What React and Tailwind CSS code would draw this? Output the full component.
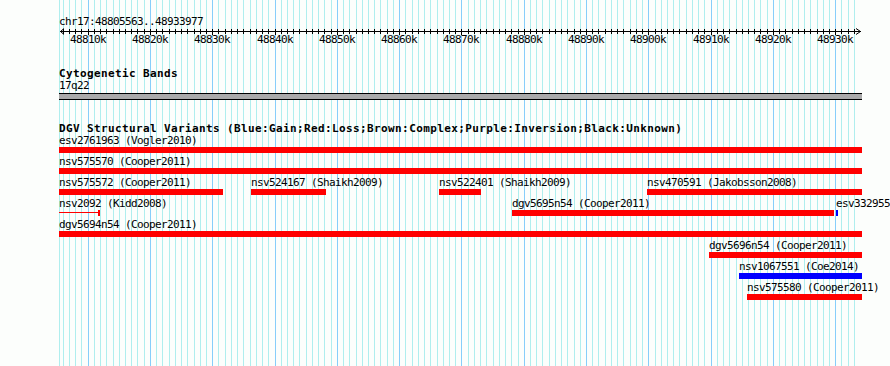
import React from "react";

const START = 48805563;
const SPAN = 128414;
const X0 = 60;
const W = 800;
const LEFT = 59;
const xOf = (bp) => Math.round(X0 + ((bp - START) / SPAN) * W);

const gridLines = [];
for (let k = 48806; k <= 48933; k++) {
  gridLines.push({ x: xOf(k * 1000), major: k % 10 === 0, k });
}
const majors = gridLines.filter((g) => g.major);

const RED = "#ff0000";
const BLUE = "#0000ff";

const rows = [
  [{ label: "esv2761963 (Vogler2010)", x1: 59, x2: 862, c: RED }],
  [{ label: "nsv575570 (Cooper2011)", x1: 59, x2: 862, c: RED }],
  [
    { label: "nsv575572 (Cooper2011)", x1: 59, x2: 223, c: RED },
    { label: "nsv524167 (Shaikh2009)", x1: 251, x2: 326, c: RED },
    { label: "nsv522401 (Shaikh2009)", x1: 439, x2: 481, c: RED },
    { label: "nsv470591 (Jakobsson2008)", x1: 647, x2: 862, c: RED },
  ],
  [
    { label: "nsv2092 (Kidd2008)", x1: 59, x2: 100, c: RED, line: true },
    { label: "dgv5695n54 (Cooper2011)", x1: 512, x2: 834, c: RED },
    { label: "esv332955", x1: 836, x2: 838, c: BLUE },
  ],
  [{ label: "dgv5694n54 (Cooper2011)", x1: 59, x2: 862, c: RED }],
  [{ label: "dgv5696n54 (Cooper2011)", x1: 709, x2: 862, c: RED }],
  [{ label: "nsv1067551 (Coe2014)", x1: 739, x2: 862, c: BLUE }],
  [{ label: "nsv575580 (Cooper2011)", x1: 747, x2: 862, c: RED }],
];

function Feature({ f }) {
  const left = f.x1 - LEFT;
  const width = f.x2 - f.x1;
  return (
    <>
      <div
        className="absolute top-0 h-[11px] leading-[11px] whitespace-nowrap text-[11px] tracking-[-0.62px] text-black"
        style={{ left }}
      >
        {f.label}
      </div>
      {f.line ? (
        <div className="absolute top-[12px] h-[6px]" style={{ left, width }}>
          <div className="absolute left-0 right-[2px] top-[2px] h-px bg-[#ff0000]" />
          <div className="absolute right-0 top-0 h-[6px] w-[2px] bg-[#ff0000]" />
        </div>
      ) : (
        <div
          className="absolute top-[12px] h-[6px]"
          style={{ left, width, backgroundColor: f.c }}
        />
      )}
    </>
  );
}

export default function App() {
  return (
    <div className="relative w-[890px] h-[366px] overflow-hidden bg-[#fcfefc] font-['DejaVu_Sans_Mono',monospace] text-black">
      <svg
        className="absolute inset-0 z-0"
        width="890"
        height="366"
        shapeRendering="crispEdges"
      >
        <line x1="59.5" y1="0" x2="59.5" y2="366" stroke="#afeeee" strokeWidth="1" />
        {gridLines.map((g) => (
          <line
            key={g.k}
            x1={g.x + 0.5}
            y1="0"
            x2={g.x + 0.5}
            y2="366"
            stroke={g.major ? "#87cefa" : "#afeeee"}
            strokeWidth="1"
          />
        ))}
      </svg>

      <div className="relative z-10 flex flex-col pl-[59px] pt-[16px]">
        <div className="h-[11px] leading-[11px] text-[11px] tracking-[-0.62px] whitespace-nowrap">
          chr17:48805563..48933977
        </div>

        <svg
          className="block overflow-visible"
          width="831"
          height="7"
          shapeRendering="crispEdges"
        >
          <line x1="1" y1="4.5" x2="802" y2="4.5" stroke="#000" strokeWidth="1" />
          {gridLines.map((g) => (
            <line
              key={g.k}
              x1={g.x - LEFT + 0.5}
              y1="2"
              x2={g.x - LEFT + 0.5}
              y2={g.major ? 8 : 7}
              stroke="#000"
              strokeWidth="1"
            />
          ))}
          <polyline
            points="5,1.5 1.5,4.5 5,7.5"
            fill="none"
            stroke="#000"
            strokeWidth="1"
            shapeRendering="auto"
          />
          <polyline
            points="797,1.5 801.5,4.5 797,7.5"
            fill="none"
            stroke="#000"
            strokeWidth="1"
            shapeRendering="auto"
          />
        </svg>

        <div className="relative h-[11px]">
          {majors.map((g) => (
            <div
              key={g.k}
              className="absolute top-0 w-[36px] text-center h-[11px] leading-[11px] text-[11px] tracking-[-0.62px] whitespace-nowrap"
              style={{ left: g.x - LEFT - 18 }}
            >
              {g.k}k
            </div>
          ))}
        </div>

        <div className="mt-[23px] h-[11px] leading-[11px] text-[11px] font-bold tracking-[0.38px] whitespace-nowrap">
          Cytogenetic Bands
        </div>
        <div className="mt-[1px] h-[11px] leading-[11px] text-[11px] tracking-[-0.62px] whitespace-nowrap">
          17q22
        </div>
        <div className="mt-[2px] h-[7px] w-[803px] border-y border-black bg-[#aaaaaa]" />

        <div className="mt-[23px] h-[11px] leading-[11px] text-[11px] font-bold tracking-[0.38px] whitespace-nowrap">
          DGV Structural Variants (Blue:Gain;Red:Loss;Brown:Complex;Purple:Inversion;Black:Unknown)
        </div>

        <div className="mt-[1px] flex flex-col">
          {rows.map((r, i) => (
            <div key={i} className="relative h-[21px]">
              {r.map((f) => (
                <Feature key={f.label} f={f} />
              ))}
            </div>
          ))}
        </div>
      </div>
    </div>
  );
}
